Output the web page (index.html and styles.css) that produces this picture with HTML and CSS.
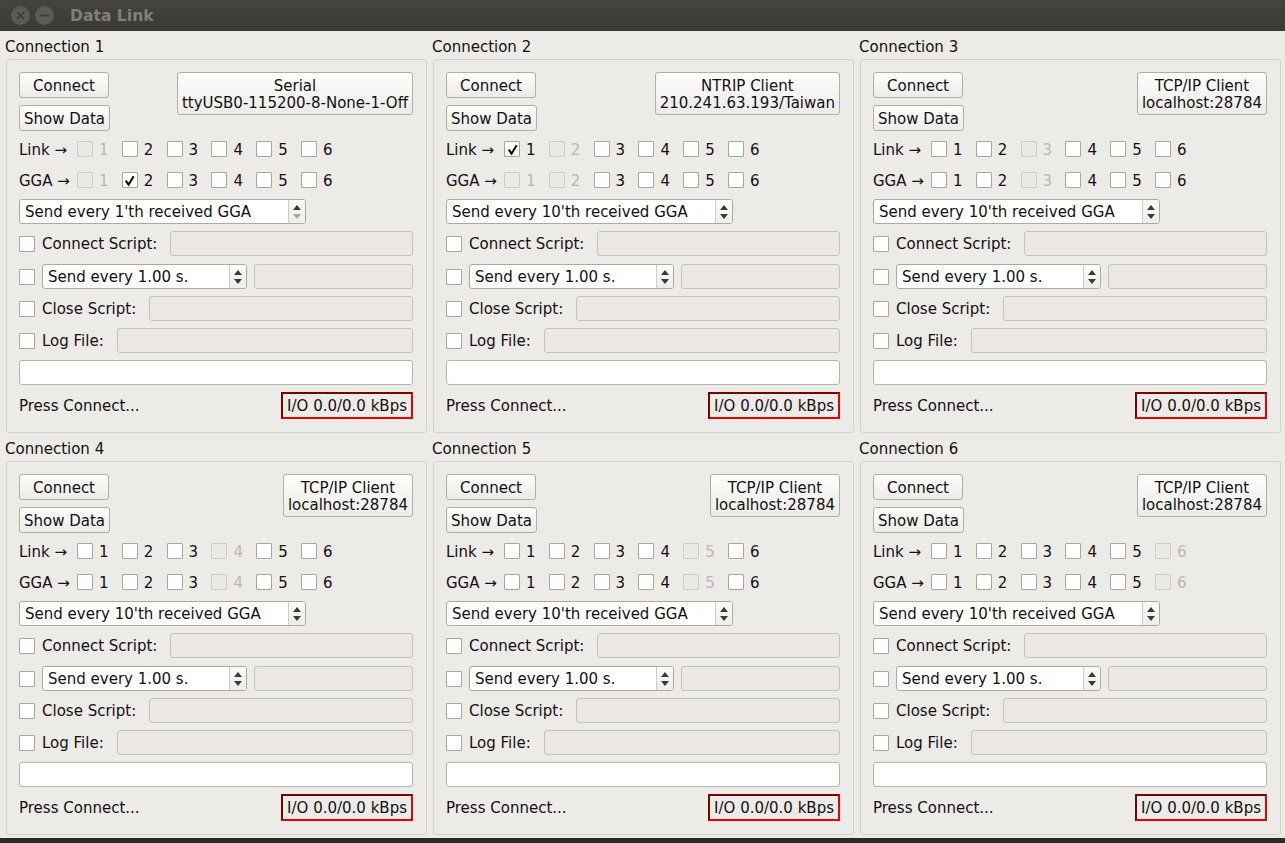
FILE: index.html
```html
<!DOCTYPE html>
<html>
<head>
<meta charset="utf-8">
<title>Data Link</title>
<link rel="stylesheet" href="styles.css">
</head>
<body>
<div class="window">
  <div class="titlebar">
    <span class="tb-btn"><svg width="9" height="9" viewBox="0 0 9 9"><path d="M1 1L8 8M8 1L1 8" stroke="#3b3a36" stroke-width="1.6"/></svg></span>
    <span class="tb-btn"><svg width="9" height="9" viewBox="0 0 9 9"><path d="M0.5 4.5H8.5" stroke="#3b3a36" stroke-width="1.8"/></svg></span>
    <span class="tb-title">Data Link</span>
  </div>
  <div class="grid">

    <!-- Connection 1 -->
    <section class="group">
      <div class="gtitle">Connection 1</div>
      <div class="frame">
        <div class="top">
          <div class="btncol">
            <div class="btn connect">Connect</div>
            <div class="btn">Show Data</div>
          </div>
          <div class="btn typebtn"><span>Serial</span><span>ttyUSB0-115200-8-None-1-Off</span></div>
        </div>
        <div class="cbrow first">
          <span class="lbl">Link →</span>
          <span class="cb off"><span class="box"></span><span class="num">1</span></span>
          <span class="cb"><span class="box"></span><span class="num">2</span></span>
          <span class="cb"><span class="box"></span><span class="num">3</span></span>
          <span class="cb"><span class="box"></span><span class="num">4</span></span>
          <span class="cb"><span class="box"></span><span class="num">5</span></span>
          <span class="cb"><span class="box"></span><span class="num">6</span></span>
        </div>
        <div class="cbrow">
          <span class="lbl">GGA →</span>
          <span class="cb off"><span class="box"></span><span class="num">1</span></span>
          <span class="cb"><span class="box"><svg class="tick" viewBox="0 0 14 14"><path d="M3 7.2L6 11.5L11.5 2.5" fill="none" stroke="#000" stroke-width="2.2"/></svg></span><span class="num">2</span></span>
          <span class="cb"><span class="box"></span><span class="num">3</span></span>
          <span class="cb"><span class="box"></span><span class="num">4</span></span>
          <span class="cb"><span class="box"></span><span class="num">5</span></span>
          <span class="cb"><span class="box"></span><span class="num">6</span></span>
        </div>
        <div class="row">
          <div class="spin gga"><span class="val">Send every 1'th received GGA</span><span class="arr"><i class="up"></i><i class="down dis"></i></span></div>
        </div>
        <div class="row">
          <span class="box"></span><span class="rlbl">Connect Script:</span><span class="field"></span>
        </div>
        <div class="row spinrow">
          <span class="box"></span>
          <div class="spin sec"><span class="val">Send every 1.00 s.</span><span class="arr"><i class="up"></i><i class="down"></i></span></div>
          <span class="field narrow"></span>
        </div>
        <div class="row">
          <span class="box"></span><span class="rlbl">Close Script:</span><span class="field"></span>
        </div>
        <div class="row">
          <span class="box"></span><span class="rlbl">Log File:</span><span class="field"></span>
        </div>
        <div class="row"><span class="input"></span></div>
        <div class="status"><span>Press Connect...</span><span class="io">I/O 0.0/0.0 kBps</span></div>
      </div>
    </section>

    <!-- Connection 2 -->
    <section class="group">
      <div class="gtitle">Connection 2</div>
      <div class="frame">
        <div class="top">
          <div class="btncol">
            <div class="btn connect">Connect</div>
            <div class="btn">Show Data</div>
          </div>
          <div class="btn typebtn"><span>NTRIP Client</span><span>210.241.63.193/Taiwan</span></div>
        </div>
        <div class="cbrow first">
          <span class="lbl">Link →</span>
          <span class="cb"><span class="box"><svg class="tick" viewBox="0 0 14 14"><path d="M3 7.2L6 11.5L11.5 2.5" fill="none" stroke="#000" stroke-width="2.2"/></svg></span><span class="num">1</span></span>
          <span class="cb off"><span class="box"></span><span class="num">2</span></span>
          <span class="cb"><span class="box"></span><span class="num">3</span></span>
          <span class="cb"><span class="box"></span><span class="num">4</span></span>
          <span class="cb"><span class="box"></span><span class="num">5</span></span>
          <span class="cb"><span class="box"></span><span class="num">6</span></span>
        </div>
        <div class="cbrow">
          <span class="lbl">GGA →</span>
          <span class="cb off"><span class="box"></span><span class="num">1</span></span>
          <span class="cb off"><span class="box"></span><span class="num">2</span></span>
          <span class="cb"><span class="box"></span><span class="num">3</span></span>
          <span class="cb"><span class="box"></span><span class="num">4</span></span>
          <span class="cb"><span class="box"></span><span class="num">5</span></span>
          <span class="cb"><span class="box"></span><span class="num">6</span></span>
        </div>
        <div class="row">
          <div class="spin gga"><span class="val">Send every 10'th received GGA</span><span class="arr"><i class="up"></i><i class="down"></i></span></div>
        </div>
        <div class="row">
          <span class="box"></span><span class="rlbl">Connect Script:</span><span class="field"></span>
        </div>
        <div class="row spinrow">
          <span class="box"></span>
          <div class="spin sec"><span class="val">Send every 1.00 s.</span><span class="arr"><i class="up"></i><i class="down"></i></span></div>
          <span class="field narrow"></span>
        </div>
        <div class="row">
          <span class="box"></span><span class="rlbl">Close Script:</span><span class="field"></span>
        </div>
        <div class="row">
          <span class="box"></span><span class="rlbl">Log File:</span><span class="field"></span>
        </div>
        <div class="row"><span class="input"></span></div>
        <div class="status"><span>Press Connect...</span><span class="io">I/O 0.0/0.0 kBps</span></div>
      </div>
    </section>

    <!-- Connection 3 -->
    <section class="group">
      <div class="gtitle">Connection 3</div>
      <div class="frame">
        <div class="top">
          <div class="btncol">
            <div class="btn connect">Connect</div>
            <div class="btn">Show Data</div>
          </div>
          <div class="btn typebtn"><span>TCP/IP Client</span><span>localhost:28784</span></div>
        </div>
        <div class="cbrow first">
          <span class="lbl">Link →</span>
          <span class="cb"><span class="box"></span><span class="num">1</span></span>
          <span class="cb"><span class="box"></span><span class="num">2</span></span>
          <span class="cb off"><span class="box"></span><span class="num">3</span></span>
          <span class="cb"><span class="box"></span><span class="num">4</span></span>
          <span class="cb"><span class="box"></span><span class="num">5</span></span>
          <span class="cb"><span class="box"></span><span class="num">6</span></span>
        </div>
        <div class="cbrow">
          <span class="lbl">GGA →</span>
          <span class="cb"><span class="box"></span><span class="num">1</span></span>
          <span class="cb"><span class="box"></span><span class="num">2</span></span>
          <span class="cb off"><span class="box"></span><span class="num">3</span></span>
          <span class="cb"><span class="box"></span><span class="num">4</span></span>
          <span class="cb"><span class="box"></span><span class="num">5</span></span>
          <span class="cb"><span class="box"></span><span class="num">6</span></span>
        </div>
        <div class="row">
          <div class="spin gga"><span class="val">Send every 10'th received GGA</span><span class="arr"><i class="up"></i><i class="down"></i></span></div>
        </div>
        <div class="row">
          <span class="box"></span><span class="rlbl">Connect Script:</span><span class="field"></span>
        </div>
        <div class="row spinrow">
          <span class="box"></span>
          <div class="spin sec"><span class="val">Send every 1.00 s.</span><span class="arr"><i class="up"></i><i class="down"></i></span></div>
          <span class="field narrow"></span>
        </div>
        <div class="row">
          <span class="box"></span><span class="rlbl">Close Script:</span><span class="field"></span>
        </div>
        <div class="row">
          <span class="box"></span><span class="rlbl">Log File:</span><span class="field"></span>
        </div>
        <div class="row"><span class="input"></span></div>
        <div class="status"><span>Press Connect...</span><span class="io">I/O 0.0/0.0 kBps</span></div>
      </div>
    </section>

    <!-- Connection 4 -->
    <section class="group">
      <div class="gtitle">Connection 4</div>
      <div class="frame">
        <div class="top">
          <div class="btncol">
            <div class="btn connect">Connect</div>
            <div class="btn">Show Data</div>
          </div>
          <div class="btn typebtn"><span>TCP/IP Client</span><span>localhost:28784</span></div>
        </div>
        <div class="cbrow first">
          <span class="lbl">Link →</span>
          <span class="cb"><span class="box"></span><span class="num">1</span></span>
          <span class="cb"><span class="box"></span><span class="num">2</span></span>
          <span class="cb"><span class="box"></span><span class="num">3</span></span>
          <span class="cb off"><span class="box"></span><span class="num">4</span></span>
          <span class="cb"><span class="box"></span><span class="num">5</span></span>
          <span class="cb"><span class="box"></span><span class="num">6</span></span>
        </div>
        <div class="cbrow">
          <span class="lbl">GGA →</span>
          <span class="cb"><span class="box"></span><span class="num">1</span></span>
          <span class="cb"><span class="box"></span><span class="num">2</span></span>
          <span class="cb"><span class="box"></span><span class="num">3</span></span>
          <span class="cb off"><span class="box"></span><span class="num">4</span></span>
          <span class="cb"><span class="box"></span><span class="num">5</span></span>
          <span class="cb"><span class="box"></span><span class="num">6</span></span>
        </div>
        <div class="row">
          <div class="spin gga"><span class="val">Send every 10'th received GGA</span><span class="arr"><i class="up"></i><i class="down"></i></span></div>
        </div>
        <div class="row">
          <span class="box"></span><span class="rlbl">Connect Script:</span><span class="field"></span>
        </div>
        <div class="row spinrow">
          <span class="box"></span>
          <div class="spin sec"><span class="val">Send every 1.00 s.</span><span class="arr"><i class="up"></i><i class="down"></i></span></div>
          <span class="field narrow"></span>
        </div>
        <div class="row">
          <span class="box"></span><span class="rlbl">Close Script:</span><span class="field"></span>
        </div>
        <div class="row">
          <span class="box"></span><span class="rlbl">Log File:</span><span class="field"></span>
        </div>
        <div class="row"><span class="input"></span></div>
        <div class="status"><span>Press Connect...</span><span class="io">I/O 0.0/0.0 kBps</span></div>
      </div>
    </section>

    <!-- Connection 5 -->
    <section class="group">
      <div class="gtitle">Connection 5</div>
      <div class="frame">
        <div class="top">
          <div class="btncol">
            <div class="btn connect">Connect</div>
            <div class="btn">Show Data</div>
          </div>
          <div class="btn typebtn"><span>TCP/IP Client</span><span>localhost:28784</span></div>
        </div>
        <div class="cbrow first">
          <span class="lbl">Link →</span>
          <span class="cb"><span class="box"></span><span class="num">1</span></span>
          <span class="cb"><span class="box"></span><span class="num">2</span></span>
          <span class="cb"><span class="box"></span><span class="num">3</span></span>
          <span class="cb"><span class="box"></span><span class="num">4</span></span>
          <span class="cb off"><span class="box"></span><span class="num">5</span></span>
          <span class="cb"><span class="box"></span><span class="num">6</span></span>
        </div>
        <div class="cbrow">
          <span class="lbl">GGA →</span>
          <span class="cb"><span class="box"></span><span class="num">1</span></span>
          <span class="cb"><span class="box"></span><span class="num">2</span></span>
          <span class="cb"><span class="box"></span><span class="num">3</span></span>
          <span class="cb"><span class="box"></span><span class="num">4</span></span>
          <span class="cb off"><span class="box"></span><span class="num">5</span></span>
          <span class="cb"><span class="box"></span><span class="num">6</span></span>
        </div>
        <div class="row">
          <div class="spin gga"><span class="val">Send every 10'th received GGA</span><span class="arr"><i class="up"></i><i class="down"></i></span></div>
        </div>
        <div class="row">
          <span class="box"></span><span class="rlbl">Connect Script:</span><span class="field"></span>
        </div>
        <div class="row spinrow">
          <span class="box"></span>
          <div class="spin sec"><span class="val">Send every 1.00 s.</span><span class="arr"><i class="up"></i><i class="down"></i></span></div>
          <span class="field narrow"></span>
        </div>
        <div class="row">
          <span class="box"></span><span class="rlbl">Close Script:</span><span class="field"></span>
        </div>
        <div class="row">
          <span class="box"></span><span class="rlbl">Log File:</span><span class="field"></span>
        </div>
        <div class="row"><span class="input"></span></div>
        <div class="status"><span>Press Connect...</span><span class="io">I/O 0.0/0.0 kBps</span></div>
      </div>
    </section>

    <!-- Connection 6 -->
    <section class="group">
      <div class="gtitle">Connection 6</div>
      <div class="frame">
        <div class="top">
          <div class="btncol">
            <div class="btn connect">Connect</div>
            <div class="btn">Show Data</div>
          </div>
          <div class="btn typebtn"><span>TCP/IP Client</span><span>localhost:28784</span></div>
        </div>
        <div class="cbrow first">
          <span class="lbl">Link →</span>
          <span class="cb"><span class="box"></span><span class="num">1</span></span>
          <span class="cb"><span class="box"></span><span class="num">2</span></span>
          <span class="cb"><span class="box"></span><span class="num">3</span></span>
          <span class="cb"><span class="box"></span><span class="num">4</span></span>
          <span class="cb"><span class="box"></span><span class="num">5</span></span>
          <span class="cb off"><span class="box"></span><span class="num">6</span></span>
        </div>
        <div class="cbrow">
          <span class="lbl">GGA →</span>
          <span class="cb"><span class="box"></span><span class="num">1</span></span>
          <span class="cb"><span class="box"></span><span class="num">2</span></span>
          <span class="cb"><span class="box"></span><span class="num">3</span></span>
          <span class="cb"><span class="box"></span><span class="num">4</span></span>
          <span class="cb"><span class="box"></span><span class="num">5</span></span>
          <span class="cb off"><span class="box"></span><span class="num">6</span></span>
        </div>
        <div class="row">
          <div class="spin gga"><span class="val">Send every 10'th received GGA</span><span class="arr"><i class="up"></i><i class="down"></i></span></div>
        </div>
        <div class="row">
          <span class="box"></span><span class="rlbl">Connect Script:</span><span class="field"></span>
        </div>
        <div class="row spinrow">
          <span class="box"></span>
          <div class="spin sec"><span class="val">Send every 1.00 s.</span><span class="arr"><i class="up"></i><i class="down"></i></span></div>
          <span class="field narrow"></span>
        </div>
        <div class="row">
          <span class="box"></span><span class="rlbl">Close Script:</span><span class="field"></span>
        </div>
        <div class="row">
          <span class="box"></span><span class="rlbl">Log File:</span><span class="field"></span>
        </div>
        <div class="row"><span class="input"></span></div>
        <div class="status"><span>Press Connect...</span><span class="io">I/O 0.0/0.0 kBps</span></div>
      </div>
    </section>

  </div>
</div>
</body>
</html>
```

FILE: styles.css
```css
html, body {
  margin: 0;
  padding: 0;
}
body {
  background: #2b2a27;
  font-family: "DejaVu Sans", "Noto Sans", sans-serif;
  font-size: 15px;
  color: #111;
  width: 1285px;
  height: 843px;
  overflow: hidden;
}
.window {
  height: 838px;
  background: #edebe7;
  overflow: hidden;
}
.titlebar {
  height: 31px;
  background: linear-gradient(#44433f, #3b3a36);
  display: flex;
  align-items: center;
  padding-left: 11px;
  box-sizing: border-box;
}
.tb-btn {
  width: 19px;
  height: 19px;
  border-radius: 50%;
  background: #5b5a56;
  margin-right: 5px;
  display: flex;
  align-items: center;
  justify-content: center;
}
.tb-title {
  margin-left: 11px;
  font-weight: bold;
  font-size: 15.6px;
  color: #807f7a;
}
.grid {
  display: grid;
  grid-template-columns: repeat(3, 421px);
  column-gap: 6px;
  padding-left: 6px;
}
.group {
  height: 402px;
}
.gtitle {
  height: 26px;
  padding-top: 2px;
  line-height: 28px;
  margin-left: -1px;
}
.frame {
  height: 374px;
  box-sizing: border-box;
  border: 1px solid #d6d3ce;
  border-radius: 3px;
  padding: 12px 13px 12px 12px;
  display: flex;
  flex-direction: column;
}
.top {
  height: 59px;
  display: flex;
  justify-content: space-between;
  align-items: flex-start;
}
.btncol {
  display: flex;
  flex-direction: column;
  align-items: flex-start;
  gap: 7px;
}
.btn {
  height: 26px;
  box-sizing: border-box;
  border: 1px solid #b1aea9;
  border-radius: 3px;
  background: linear-gradient(#fdfdfc, #ecebe8);
  padding: 2px 4px 0;
  display: flex;
  align-items: center;
  justify-content: center;
  white-space: nowrap;
}
.connect {
  width: 90px;
}
.typebtn {
  height: 43px;
  flex-direction: column;
  line-height: 17px;
  padding: 6px 4px 3px;
  text-align: center;
}
.cbrow {
  height: 24px;
  margin-top: 7px;
  display: flex;
  align-items: center;
}
.cbrow.first {
  margin-top: 6px;
}
.lbl {
  width: 58px;
  flex: none;
  padding-top: 2px;
}
.cb {
  width: 44.8px;
  flex: none;
  display: flex;
  align-items: center;
  gap: 6px;
}
.num {
  padding-top: 2px;
}
.box {
  width: 16px;
  height: 16px;
  flex: none;
  box-sizing: border-box;
  border: 1px solid #a9a6a1;
  border-radius: 1px;
  background: #fff;
  display: flex;
  align-items: center;
  justify-content: center;
}
.cb.off .box {
  border-color: #cfccc8;
  background: #ebe9e5;
}
.cb.off .num {
  color: #b9b7b3;
}
.tick {
  width: 13px;
  height: 13px;
}
.row {
  height: 25px;
  margin-top: 7px;
  display: flex;
  align-items: center;
}
.row.spinrow {
  margin-top: 8px;
}
.rlbl {
  margin-left: 7px;
  white-space: nowrap;
}
.field {
  flex: 1;
  height: 25px;
  box-sizing: border-box;
  border: 1px solid #c5c2bd;
  border-radius: 3px;
  background: #ebe8e4;
  margin-left: 13px;
}
.field.narrow {
  margin-left: 7px;
}
.input {
  flex: 1;
  height: 25px;
  box-sizing: border-box;
  border: 1px solid #b8b5b0;
  border-radius: 3px;
  background: #fff;
}
.spin {
  height: 25px;
  box-sizing: border-box;
  border: 1px solid #adaaa5;
  border-radius: 3px;
  background: #fff;
  display: flex;
  overflow: hidden;
}
.spin.gga {
  width: 287px;
}
.spin.sec {
  width: 205px;
  margin-left: 7px;
}
.spin .val {
  flex: 1;
  padding: 1px 0 0 5px;
  line-height: 23px;
  white-space: nowrap;
}
.spin .arr {
  width: 16px;
  border-left: 1px solid #cfccc7;
  background: linear-gradient(#fbfbfa, #efedea);
  display: flex;
  flex-direction: column;
  align-items: center;
  justify-content: center;
  gap: 4px;
}
.up {
  width: 0;
  height: 0;
  border-left: 4px solid transparent;
  border-right: 4px solid transparent;
  border-bottom: 5px solid #3a3a3a;
}
.down {
  width: 0;
  height: 0;
  border-left: 4px solid transparent;
  border-right: 4px solid transparent;
  border-top: 5px solid #3a3a3a;
}
.down.dis {
  border-top-color: #a9a7a3;
}
.status {
  height: 27px;
  margin-top: 7px;
  display: flex;
  align-items: center;
  justify-content: space-between;
}
.io {
  height: 27px;
  box-sizing: border-box;
  border: 2px solid;
  border-color: #7d0000 #e60000 #e60000 #7d0000;
  padding: 0 4px;
  display: flex;
  align-items: center;
  white-space: nowrap;
}
```
